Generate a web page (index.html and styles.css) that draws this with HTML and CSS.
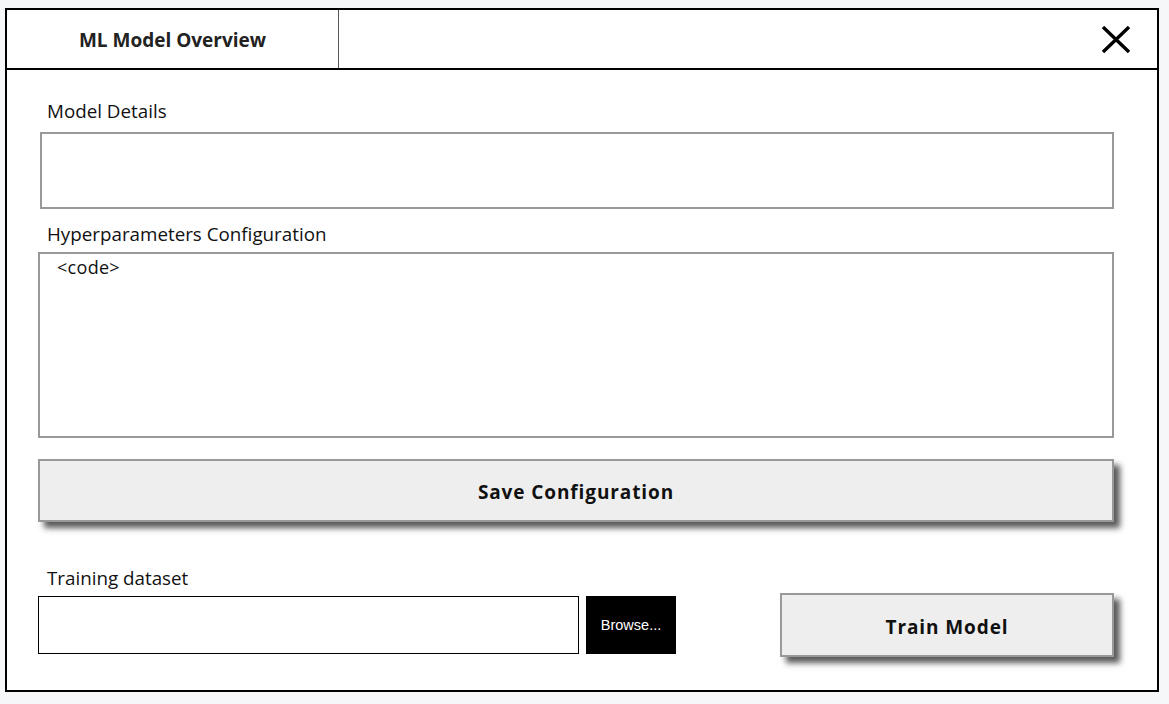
FILE: index.html
```html
<!DOCTYPE html>
<html>
<head>
<meta charset="utf-8">
<link rel="stylesheet" href="styles.css">
</head>
<body>
<div class="window">
  <div class="header">
    <div class="tab">ML Model Overview</div>
    <div class="close">
      <svg width="30" height="28" viewBox="0 0 30 28"><path d="M2 1 L28 26 M28 1 L2 26" stroke="#000" stroke-width="3.4" fill="none"/></svg>
    </div>
  </div>
  <div class="content">
    <div class="label">Model Details</div>
    <div class="details-box"></div>
    <div class="label label2">Hyperparameters Configuration</div>
    <div class="code-box">&lt;code&gt;</div>
    <div class="btn save">Save Configuration</div>
    <div class="label label3">Training dataset</div>
    <div class="row">
      <div class="file-input"></div>
      <div class="browse">Browse...</div>
      <div class="spacer"></div>
      <div class="btn train">Train Model</div>
    </div>
  </div>
</div>
</body>
</html>
```
FILE: styles.css
```css
html, body { margin: 0; padding: 0; }
body {
  background: #f6f7f9;
  font-family: "Open Sans", "Noto Sans", sans-serif;
  color: #111;
  padding: 8px 0 0 5px;
}
.window {
  width: 1154px;
  height: 684px;
  box-sizing: border-box;
  border: 2px solid #000;
  background: #fff;
}
.header {
  display: flex;
  height: 60px;
  box-sizing: border-box;
  border-bottom: 2px solid #000;
}
.tab {
  width: 332px;
  border-right: 1px solid #555;
  display: flex;
  align-items: center;
  justify-content: center;
  font-weight: 700;
  font-size: 19px;
  padding-top: 2px;
  box-sizing: border-box;
  color: #222;
}
.close {
  flex: 1;
  display: flex;
  justify-content: flex-end;
  align-items: center;
  padding-right: 26px;
}
.close svg { margin-top: 2px; }
.content {
  padding: 29px 43px 0 31px;
}
.label {
  font-size: 18.8px;
  line-height: 24px;
  padding-left: 9px;
  color: #111;
}
.details-box {
  margin: 9px 0 0 2px;
  height: 77px;
  box-sizing: border-box;
  border: 2px solid #999;
}
.label2 { margin-top: 13px; }
.code-box {
  margin-top: 6px;
  height: 186px;
  box-sizing: border-box;
  border: 2px solid #999;
  padding: 3px 0 0 17px;
  font-size: 18px;
  line-height: 20px;
  letter-spacing: 0.3px;
  color: #111;
}
.btn {
  background: #eee;
  border: 2px solid #999;
  box-sizing: border-box;
  box-shadow: 6px 6px 6px rgba(0,0,0,0.65);
  display: flex;
  align-items: center;
  justify-content: center;
  font-weight: 700;
  font-size: 19px;
  letter-spacing: 0.9px;
  padding-top: 3px;
  color: #111;
}
.save {
  margin-top: 21px;
  height: 63px;
}
.label3 { margin-top: 44px; }
.row {
  display: flex;
  align-items: center;
  margin-top: 3px;
  height: 64px;
}
.file-input {
  width: 541px;
  height: 58px;
  box-sizing: border-box;
  border: 1px solid #000;
}
.browse {
  margin-left: 7px;
  width: 90px;
  height: 58px;
  background: #000;
  color: #fff;
  font-family: "Liberation Sans", Arial, sans-serif;
  font-size: 14.5px;
  display: flex;
  align-items: center;
  justify-content: center;
}
.spacer { flex: 1; }
.train {
  width: 334px;
  height: 64px;
}
```
